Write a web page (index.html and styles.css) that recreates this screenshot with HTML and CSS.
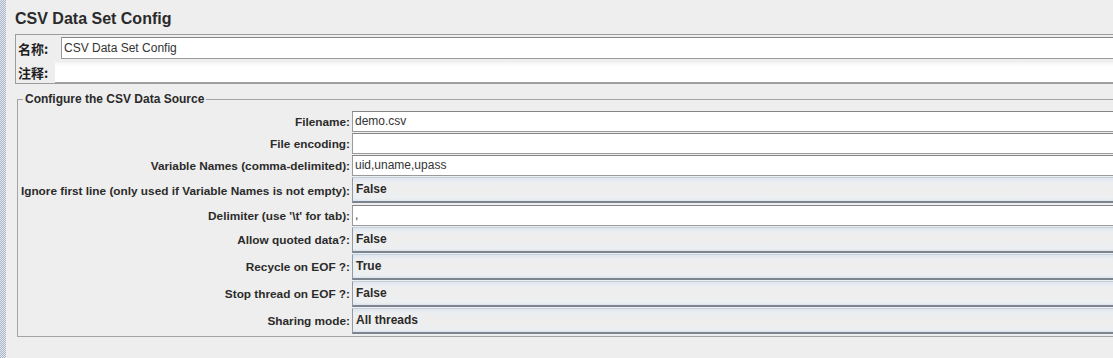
FILE: index.html
```html
<html lang="zh">

<head>
    <meta charset="UTF-8">
    <title>CSV Data Set Config</title>
    <link rel="stylesheet" href="styles.css">
</head>

<body>
<div class="page">
  <div class="edge"></div>

  <div class="main">
    <h1 class="title">CSV Data Set Config</h1>

    <div class="namebox">
      <div class="name-row">
        <span class="cn name-label">名称:</span>
        <div class="input name-input">CSV Data Set Config</div>
      </div>
      <div class="comment-row">
        <span class="cn comment-label">注释:</span>
        <div class="area"></div>
      </div>
    </div>

    <fieldset class="group">
      <legend>Configure the CSV Data Source</legend>
      <div class="form">
        <label>Filename:</label>
        <div class="input">demo.csv</div>

        <label>File encoding:</label>
        <div class="input"></div>

        <label>Variable Names (comma-delimited):</label>
        <div class="input">uid,uname,upass</div>

        <label>Ignore first line (only used if Variable Names is not empty):</label>
        <div class="combo first">False</div>

        <label>Delimiter (use '\t' for tab):</label>
        <div class="input">,</div>

        <label>Allow quoted data?:</label>
        <div class="combo">False</div>

        <label>Recycle on EOF ?:</label>
        <div class="combo">True</div>

        <label>Stop thread on EOF ?:</label>
        <div class="combo">False</div>

        <label>Sharing mode:</label>
        <div class="combo">All threads</div>
      </div>
    </fieldset>
  </div>
</div>
</body>

</html>
```

FILE: styles.css
```css
* {
    box-sizing: border-box;
}

body {
    margin: 0;
    background-color: #eeeeee;
    font-family: "Liberation Sans", Arial, "Noto Sans CJK SC", sans-serif;
    color: #2b2b2b;
    overflow: hidden;
}

.page {
    display: flex;
    height: 358px;
}

.edge {
    width: 6px;
    flex: none;
    background: repeating-conic-gradient(#a9b5c8 0 25%, #e4e8ee 0 50%) 0 0 / 2px 2px;
}

.main {
    flex: 1;
    padding-left: 9px;
    margin-right: -30px;
}

.title {
    font-size: 16px;
    font-weight: bold;
    line-height: 20px;
    margin: 9px 0 5px 0;
    color: #2a2a2a;
}

.namebox {
    border: 1px solid #9c9c9c;
    border-right: none;
    padding-top: 2px;
}

.name-row,
.comment-row {
    display: flex;
    align-items: center;
}

.cn {
    font-family: "Noto Sans CJK SC", sans-serif;
    font-size: 13px;
    font-weight: bold;
    padding-left: 2px;
    color: #1e1e1e;
}

.name-label {
    width: 45px;
}

.comment-label {
    width: 39px;
}

.input {
    flex: 1;
    height: 21px;
    background-color: #ffffff;
    border: 1px solid #9a9a9a;
    border-top-color: #858585;
    border-right: none;
    font-size: 12px;
    line-height: 19px;
    padding-left: 2px;
    color: #333;
}

.name-input {
    height: 22px;
    line-height: 20px;
}

.comment-row {
    margin-top: 2px;
}

.area {
    flex: 1;
    height: 22px;
    background: linear-gradient(#ececec, #fafafa 3px, #ffffff 6px);
    border-bottom: 1px solid #a0a0a0;
}

.group {
    margin: 8px 0 0 2px;
    padding: 0 0 2px 0;
    border: 1px solid #a4a4a4;
    border-right: none;
}

.group legend {
    font-size: 12px;
    font-weight: bold;
    line-height: 14px;
    margin-left: 5px;
    padding: 0 2px;
    color: #2a2a2a;
}

.form {
    display: grid;
    grid-template-columns: 334px 1fr;
    row-gap: 1px;
    padding-top: 5px;
}

.form label {
    font-size: 11.8px;
    font-weight: bold;
    text-align: right;
    white-space: nowrap;
    padding-right: 2px;
    align-self: center;
    color: #2b2b2b;
}

.combo {
    height: 26px;
    background: linear-gradient(#dfe6ee, #eceef0 4px, #efeeed 50%, #eceff2 90%, #dbe3ea);
    border-top: 1px solid #c3d1de;
    border-left: 1px solid #8d9bab;
    border-bottom: 2px solid #7c858f;
    font-size: 12px;
    font-weight: bold;
    line-height: 23px;
    padding-left: 3px;
    color: #2b2b2b;
}

.combo.first {
    margin-bottom: 1px;
}
```
